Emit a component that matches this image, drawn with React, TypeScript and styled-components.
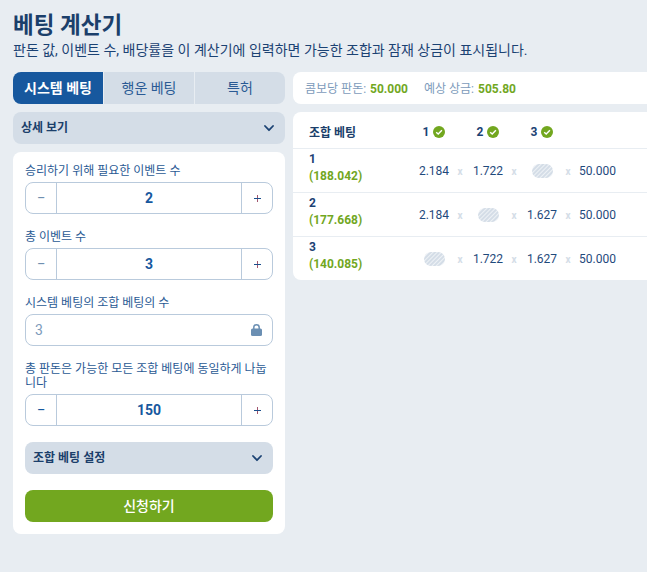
import React from "react";
import styled, { createGlobalStyle } from "styled-components";

const Global = createGlobalStyle`
  html, body { margin: 0; padding: 0; background: #e8edf2; }
  body { font-family: Roboto, "Noto Sans CJK KR", sans-serif; overflow: hidden; }
  * { box-sizing: border-box; }
`;

const Page = styled.div`
  width: 647px;
  height: 572px;
  padding: 13px 0 0 13px;
  overflow: hidden;
  color: #1b4273;
`;
const Title = styled.h1`
  margin: 0;
  font-size: 22.5px;
  line-height: 24px;
  font-weight: 700;
  color: #1b3f6b;
`;
const Subtitle = styled.p`
  margin: 1px 0 0;
  font-size: 14px;
  line-height: 24px;
  color: #1b4273;
  white-space: nowrap;
`;
const Columns = styled.div`
  display: flex;
  gap: 8px;
  margin-top: 10px;
  align-items: flex-start;
`;
const Left = styled.div`
  width: 272px;
  flex: none;
  display: flex;
  flex-direction: column;
  gap: 8px;
`;
const Right = styled.div`
  width: 370px;
  flex: none;
  display: flex;
  flex-direction: column;
  gap: 8px;
`;
const Tabs = styled.div`
  display: grid;
  grid-template-columns: 90px 91px 91px;
  height: 32px;
  border-radius: 8px;
  overflow: hidden;
`;
const Tab = styled.div<{ $active?: boolean }>`
  display: flex;
  align-items: center;
  justify-content: center;
  padding-bottom: 2px;
  font-size: 14px;
  font-weight: ${(p) => (p.$active ? 700 : 400)};
  background: ${(p) => (p.$active ? "#17589e" : "#d4dde7")};
  color: ${(p) => (p.$active ? "#fff" : "#2a5a94")};
  & + & { border-left: 1px solid #e8edf2; }
`;
const Accordion = styled.div`
  height: 32px;
  border-radius: 8px;
  background: #d4dde7;
  display: flex;
  align-items: center;
  justify-content: space-between;
  padding: 0 11px 0 8px;
  font-size: 12px;
  font-weight: 700;
  color: #1b3f6b;
`;
const AccordionTitle = styled.span`
  margin-bottom: 3px;
`;
const Card = styled.div`
  background: #fff;
  border-radius: 8px;
  padding: 12px;
  display: flex;
  flex-direction: column;
`;
const Field = styled.div`
  margin-bottom: 16px;
`;
const Label = styled.div`
  font-size: 12px;
  line-height: 14px;
  color: #2a5a94;
  margin-bottom: 4px;
`;
const Stepper = styled.div`
  height: 32px;
  border: 1px solid #b9cadc;
  border-radius: 8px;
  display: grid;
  grid-template-columns: 30px 1fr 30px;
`;
const StepButton = styled.div<{ $tone: "muted" | "dark" }>`
  display: flex;
  align-items: center;
  justify-content: center;
  font-size: 15px;
  padding-left: 0.5px;
  color: ${(p) => (p.$tone === "muted" ? "#6f8fb0" : "#17589e")};
`;
const StepValue = styled.div`
  display: flex;
  align-items: center;
  justify-content: center;
  font-size: 14px;
  font-weight: 700;
  color: #17589e;
  border-left: 1px solid #b9cadc;
  border-right: 1px solid #b9cadc;
`;
const Locked = styled.div`
  height: 32px;
  border: 1px solid #b9cadc;
  border-radius: 8px;
  display: flex;
  align-items: center;
  justify-content: space-between;
  padding: 0 10px 0 9px;
  font-size: 14px;
  color: #7d9bbb;
`;
const Submit = styled.div`
  margin-top: 16px;
  height: 32px;
  border-radius: 8px;
  background: #72a71f;
  color: #fff;
  font-size: 14px;
  font-weight: 500;
  padding-bottom: 2px;
  display: flex;
  align-items: center;
  justify-content: center;
`;
const Summary = styled.div`
  height: 32px;
  background: #fff;
  border-radius: 8px 0 0 8px;
  display: flex;
  align-items: center;
  gap: 16px;
  padding: 0 0 2px 12px;
  font-size: 12px;
  color: #7d9bbb;
`;
const SummaryValue = styled.b`
  font-weight: 700;
  margin-left: 1px;
  color: #72a71f;
`;
const Table = styled.div`
  background: #fff;
  border-radius: 8px 0 0 8px;
`;
const Row = styled.div<{ $head?: boolean }>`
  display: grid;
  grid-template-columns: 105px 40px 14px 40px 14px 40px 14px 43px;
  grid-template-rows: 1fr;
  height: ${(p) => (p.$head ? "36px" : "44px")};
  padding: ${(p) => (p.$head ? "3px 0 0 16px" : "0 0 0 16px")};
  align-items: center;
  font-size: 12px;
  & + & { border-top: 1px solid #e8edf2; }
`;
const HeadName = styled.div`
  font-weight: 700;
  color: #1b3f6b;
`;
const HeadCell = styled.div`
  display: flex;
  align-items: center;
  justify-content: center;
  gap: 4px;
  font-weight: 700;
  color: #1b4273;
`;
const Name = styled.div`
  align-self: start;
  padding-top: 2px;
  font-weight: 700;
  line-height: 17px;
  color: #1b4273;
`;
const Profit = styled.div`
  color: #72a71f;
`;
const Cell = styled.div`
  padding-top: 1px;
  white-space: nowrap;
  color: #1f4a7c;
  display: flex;
  justify-content: center;
`;
const Times = styled.div`
  text-align: center;
  padding: 1px 2px 0 0;
  font-size: 10px;
  font-weight: 700;
  color: #d4dde7;
`;

const Chevron = () => (
  <svg width="10" height="7" viewBox="0 0 10 7" fill="none">
    <path d="M1 1 5 5.2 9 1" stroke="#1b4273" strokeWidth="1.8" strokeLinecap="round" strokeLinejoin="round" />
  </svg>
);
const Check = () => (
  <svg width="12" height="12" viewBox="0 0 12 12">
    <circle cx="6" cy="6" r="6" fill="#72a71f" />
    <path d="M3.2 6.2 5.2 8.1 8.9 4.2" fill="none" stroke="#fff" strokeWidth="1.4" />
  </svg>
);
const Lock = () => (
  <svg width="11" height="12" viewBox="0 0 11 12">
    <path d="M2.8 6V3.5a2.7 2.7 0 0 1 5.4 0V6" fill="none" stroke="#6b8fb3" strokeWidth="1.5" />
    <rect x="0" y="4.6" width="11" height="7.4" rx="1.5" fill="#6b8fb3" />
  </svg>
);
const Plus = () => (
  <svg width="7" height="7" viewBox="0 0 7 7">
    <rect x="3" y="0" width="1" height="7" fill="#a2566f" />
    <rect x="0" y="3" width="7" height="1" fill="#1b4f8c" />
  </svg>
);
const Hatch = ({ id }: { id: string }) => (
  <svg width="21" height="14" viewBox="0 0 21 14">
    <defs>
      <pattern id={id} width="3" height="3" patternUnits="userSpaceOnUse" patternTransform="rotate(-45)">
        <rect width="3" height="3" fill="#d4dde7" />
        <rect width="3" height="1" fill="#eef2f6" />
      </pattern>
    </defs>
    <rect width="21" height="14" rx="7" fill={`url(#${id})`} />
  </svg>
);

const StepperField = ({ label, value, minTone }: { label: string; value: string; minTone: "muted" | "dark" }) => (
  <Field>
    <Label>{label}</Label>
    <Stepper>
      <StepButton $tone={minTone}>−</StepButton>
      <StepValue>{value}</StepValue>
      <StepButton $tone="dark">
        <Plus />
      </StepButton>
    </Stepper>
  </Field>
);

const rows = [
  { n: "1", p: "(188.042)", v: ["2.184", "1.722", null, "50.000"] },
  { n: "2", p: "(177.668)", v: ["2.184", null, "1.627", "50.000"] },
  { n: "3", p: "(140.085)", v: [null, "1.722", "1.627", "50.000"] },
];

export default function App() {
  return (
    <Page>
      <Global />
      <Title>베팅 계산기</Title>
      <Subtitle>판돈 값, 이벤트 수, 배당률을 이 계산기에 입력하면 가능한 조합과 잠재 상금이 표시됩니다.</Subtitle>
      <Columns>
        <Left>
          <Tabs>
            <Tab $active>시스템 베팅</Tab>
            <Tab>행운 베팅</Tab>
            <Tab>특허</Tab>
          </Tabs>
          <Accordion>
            <AccordionTitle>상세 보기</AccordionTitle>
            <Chevron />
          </Accordion>
          <Card>
            <StepperField label="승리하기 위해 필요한 이벤트 수" value="2" minTone="muted" />
            <StepperField label="총 이벤트 수" value="3" minTone="muted" />
            <Field>
              <Label>시스템 베팅의 조합 베팅의 수</Label>
              <Locked>
                3
                <Lock />
              </Locked>
            </Field>
            <StepperField label="총 판돈은 가능한 모든 조합 베팅에 동일하게 나눕니다" value="150" minTone="dark" />
            <Accordion>
              <AccordionTitle>조합 베팅 설정</AccordionTitle>
              <Chevron />
            </Accordion>
            <Submit>신청하기</Submit>
          </Card>
        </Left>
        <Right>
          <Summary>
            <span>
              콤보당 판돈: <SummaryValue>50.000</SummaryValue>
            </span>
            <span>
              예상 상금: <SummaryValue>505.80</SummaryValue>
            </span>
          </Summary>
          <Table>
            <Row $head>
              <HeadName>조합 베팅</HeadName>
              {["1", "2", "3"].map((h) => (
                <React.Fragment key={h}>
                  <HeadCell>
                    {h}
                    <Check />
                  </HeadCell>
                  <span />
                </React.Fragment>
              ))}
            </Row>
            {rows.map((r) => (
              <Row key={r.n}>
                <Name>
                  {r.n}
                  <Profit>{r.p}</Profit>
                </Name>
                {r.v.map((v, i) => (
                  <React.Fragment key={i}>
                    <Cell>{v ?? <Hatch id={`h${r.n}${i}`} />}</Cell>
                    {i < 3 ? <Times>x</Times> : <span />}
                  </React.Fragment>
                ))}
              </Row>
            ))}
          </Table>
        </Right>
      </Columns>
    </Page>
  );
}
